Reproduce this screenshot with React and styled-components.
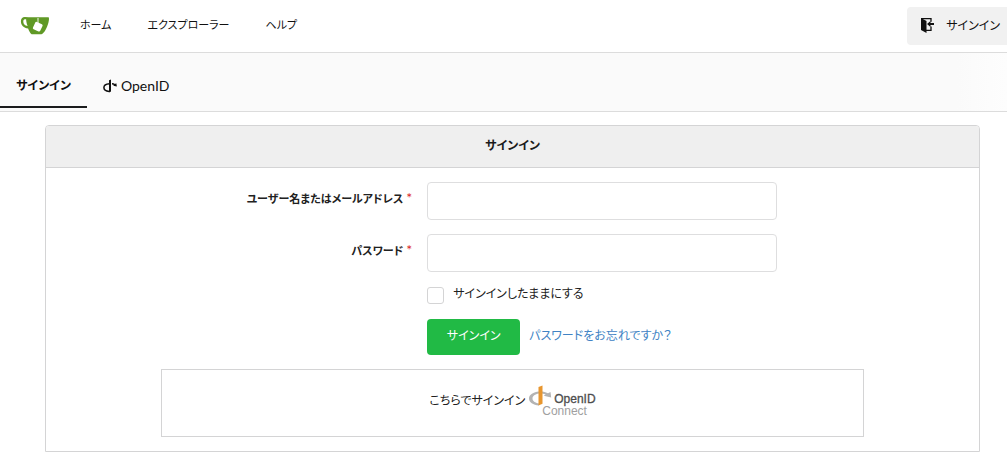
import React from 'react';
import styled, { createGlobalStyle } from 'styled-components';

const GlobalStyle = createGlobalStyle`
  * {
    box-sizing: border-box;
  }

  body {
    margin: 0;
    background: #fff;
    color: #212121;
    font-family: Lato, "Noto Sans CJK JP", sans-serif;
    font-size: 12px;
    line-height: 20px;
    font-feature-settings: "palt";
  }

  button, input {
    font: inherit;
    font-feature-settings: inherit;
  }
`;

const Navbar = styled.nav`
  display: flex;
  align-items: center;
  height: 53px;
  padding-left: 20px;
  border-bottom: 1px solid #dcdcdc;
`;

const Brand = styled.a`
  display: flex;
  margin-right: 12px;
`;

const NavLink = styled.a`
  margin-bottom: 3px;
  padding: 8px 18px;
  color: #101010;
  font-size: 11px;
  text-decoration: none;
  white-space: nowrap;
`;

const SignInLink = styled.a`
  display: flex;
  align-items: center;
  gap: 12px;
  height: 38px;
  margin-left: auto;
  padding: 0 7px 1px 13px;
  border-radius: 4px 0 0 4px;
  background: #f1f1f1;
  color: #101010;
  text-decoration: none;
  white-space: nowrap;
`;

const TabBar = styled.div`
  display: flex;
  align-items: flex-end;
  height: 59px;
  padding-bottom: 3px;
  border-bottom: 1px solid #dcdcdc;
  background: linear-gradient(to right, #fafafa 95%, #fdfdfd);
`;

const Tab = styled.a`
  display: flex;
  align-items: center;
  gap: 4px;
  padding: 10px 16px;
  border-bottom: 2px solid ${props => (props.$active ? '#1b1c1d' : 'transparent')};
  color: #101010;
  font-weight: ${props => (props.$active ? 700 : 400)};
  font-size: ${props => (props.$active ? 12 : 14)}px;
  text-decoration: none;
`;

const Card = styled.main`
  margin: 13px 27px 0 45px;
  border: 1px solid #d4d4d5;
  border-radius: 4px 4px 0 0;
`;

const CardHeader = styled.h1`
  margin: 0;
  padding: 10px 0 11px;
  border-bottom: 1px solid #d4d4d5;
  border-radius: 3px 3px 0 0;
  background: #efefef;
  color: #1b1b1b;
  font-size: 12px;
  font-weight: 700;
  text-align: center;
`;

const Form = styled.form`
  padding: 14px 0;
`;

const Row = styled.div`
  display: grid;
  grid-template-columns: 49fr 350px 25fr;
  column-gap: 15px;
  margin-bottom: 14px;
`;

const Label = styled.label`
  padding-top: 7px;
  font-size: 11px;
  font-weight: 700;
  text-align: right;

  &::after {
    content: '*';
    margin-left: 3px;
    color: #db2828;
    font-size: 14px;
    font-weight: 400;
    line-height: 1;
  }
`;

const TextInput = styled.input`
  width: 100%;
  height: 38px;
  padding: 0 14px;
  border: 1px solid #dededf;
  border-radius: 4px;
  background: #fff;
  outline: none;
`;

const Field = styled.div`
  grid-column: 2;
  display: flex;
  align-items: center;
  gap: 9px;
  white-space: nowrap;
`;

const RememberField = styled(Field)`
  height: 19px;
`;

const RememberLabel = styled.label`
  padding-bottom: 3px;
`;

const Checkbox = styled.input`
  appearance: none;
  width: 17px;
  height: 17px;
  margin: 0;
  border: 1px solid #d4d4d5;
  border-radius: 3px;

  &:checked {
    background: #21ba45;
  }
`;

const SubmitButton = styled.button`
  width: 93px;
  height: 36px;
  padding: 0 0 3px;
  border: 0;
  border-radius: 4px;
  background: #21ba45;
  color: #fff;
`;

const ForgotLink = styled.a`
  padding-bottom: 3px;
  color: #4183c4;
  text-decoration: none;
`;

const OAuthBox = styled.div`
  display: flex;
  align-items: center;
  justify-content: center;
  width: 703px;
  max-width: 100%;
  height: 68px;
  margin: 0 auto;
  border: 1px solid #d4d4d5;
`;

const OAuthLink = styled.a`
  display: flex;
  align-items: center;
  margin-bottom: 4px;
  color: #212121;
  text-decoration: none;
`;

const ConnectText = styled.span`
  display: flex;
  flex-direction: column;
  margin-top: 8px;
  color: #4d4d4d;
  font: 12px/12px "Liberation Sans", Arial, sans-serif;
`;

const OpenIDName = styled.span`
  padding-left: 12px;
  -webkit-text-stroke: 0.3px #4d4d4d;
`;

const ConnectName = styled.span`
  color: #a0a0a0;
`;

const OpenIDConnect = styled.span`
  display: flex;
  margin-left: 4px;

  svg {
    margin-right: -10px;
  }
`;

const GiteaLogo = () => (
  <svg width="30" height="20" viewBox="0 0 30 20" aria-hidden="true">
    <path fill="#609926" fillRule="evenodd" d="M5 .9C2.500.8.7 2.600.9 5.600c.2 4 2.800 6.400 7.200 6.900.9 2.200 2 4.700 3.500 5.700h9.900c2.600-.7 5.400-6 6.900-11.400.6-2.200.9-4.800.2-5.500C23 1.400 11 1.400 5 .9Zm-.2 2.300h1.300c.2 2.800.7 4.800 1.500 6.700C4.700 9.400 3.300 7.800 3.300 5.400c0-1.300.5-2.100 1.500-2.200Z" />
    <path stroke="#dbe8ce" strokeWidth="1.200" d="M18 2v5" />
    <rect x="13.700" y="6.700" width="8" height="8" rx="1.300" fill="#fff" transform="rotate(25 17.800 10.800)" />
  </svg>
);

const SignInIcon = () => (
  <svg width="14" height="17" viewBox="0 0 14 17" aria-hidden="true">
    <path fill="#101010" d="M1 1v12l5.500 3V4L1 1Z" />
    <path fill="none" stroke="#101010" strokeWidth="1.300" d="M1 1.600h10v3.200M11 9.500v3.800H6" />
    <path fill="#101010" d="M7 7l3.500-3v2H14v2h-3.500v2L7 7Z" />
  </svg>
);

const OpenIDIcon = () => (
  <svg width="14" height="14" viewBox="0 0 14 14" aria-hidden="true">
    <path fill="none" stroke="#101010" strokeWidth="1.500" d="M6.500 4.800C2.800 5 .9 6.600.9 8.600c0 2.200 2 3.700 5.300 3.900" />
    <path fill="#101010" d="M6 1.200 8 .4v12.200L6 13.400Z" />
    <path fill="#101010" d="M9 4c1.200.1 2.200.5 3 1l1.300-.8.6 3.400-3.800-.8 1-.7c-.6-.3-1.300-.5-2.100-.6Z" />
  </svg>
);

const ConnectIcon = () => (
  <svg width="23" height="23" viewBox="0 0 23 23" aria-hidden="true">
    <path fill="#b3b3b3" d="M10 6.500C4.500 7 0 9.500 0 13.500 0 17.300 4 20 10 20.500v-2c-4-.5-6.500-2.500-6.500-5S6 9 10 8.500Z" />
    <path fill="#b3b3b3" d="M13 6.500c2.300.2 4.500.9 6 1.800L21.500 7l.7 5.500-7.500-1.700 2-1.200c-1-.5-2.300-.9-3.700-1.100Z" />
    <path fill="#e8962e" d="M9.500 2 13.500.4v18.300L9.500 20.500Z" />
  </svg>
);

const App = () => {
  return (
    <>
      <GlobalStyle />
      <Navbar>
        <Brand href="/" aria-label="Gitea">
          <GiteaLogo />
        </Brand>
        <NavLink href="/">ホーム</NavLink>
        <NavLink href="/explore">エクスプローラー</NavLink>
        <NavLink href="/help">ヘルプ</NavLink>
        <SignInLink href="/user/login">
          <SignInIcon />
          サインイン
        </SignInLink>
      </Navbar>
      <TabBar>
        <Tab href="/user/login" $active>サインイン</Tab>
        <Tab href="/user/login/openid">
          <OpenIDIcon />
          OpenID
        </Tab>
      </TabBar>
      <Card>
        <CardHeader>サインイン</CardHeader>
        <Form>
          <Row>
            <Label htmlFor="user_name">ユーザー名またはメールアドレス</Label>
            <TextInput id="user_name" name="user_name" required />
          </Row>
          <Row>
            <Label htmlFor="password">パスワード</Label>
            <TextInput id="password" name="password" type="password" required />
          </Row>
          <Row>
            <RememberField>
              <Checkbox id="remember" name="remember" type="checkbox" />
              <RememberLabel htmlFor="remember">サインインしたままにする</RememberLabel>
            </RememberField>
          </Row>
          <Row>
            <Field>
              <SubmitButton type="submit">サインイン</SubmitButton>
              <ForgotLink href="/user/forgot_password">パスワードをお忘れですか？</ForgotLink>
            </Field>
          </Row>
          <OAuthBox>
            <OAuthLink href="/user/oauth2/openid">
              こちらでサインイン
              <OpenIDConnect>
                <ConnectIcon />
                <ConnectText>
                  <OpenIDName>OpenID</OpenIDName>
                  <ConnectName>Connect</ConnectName>
                </ConnectText>
              </OpenIDConnect>
            </OAuthLink>
          </OAuthBox>
        </Form>
      </Card>
    </>
  );
};

export default App;
